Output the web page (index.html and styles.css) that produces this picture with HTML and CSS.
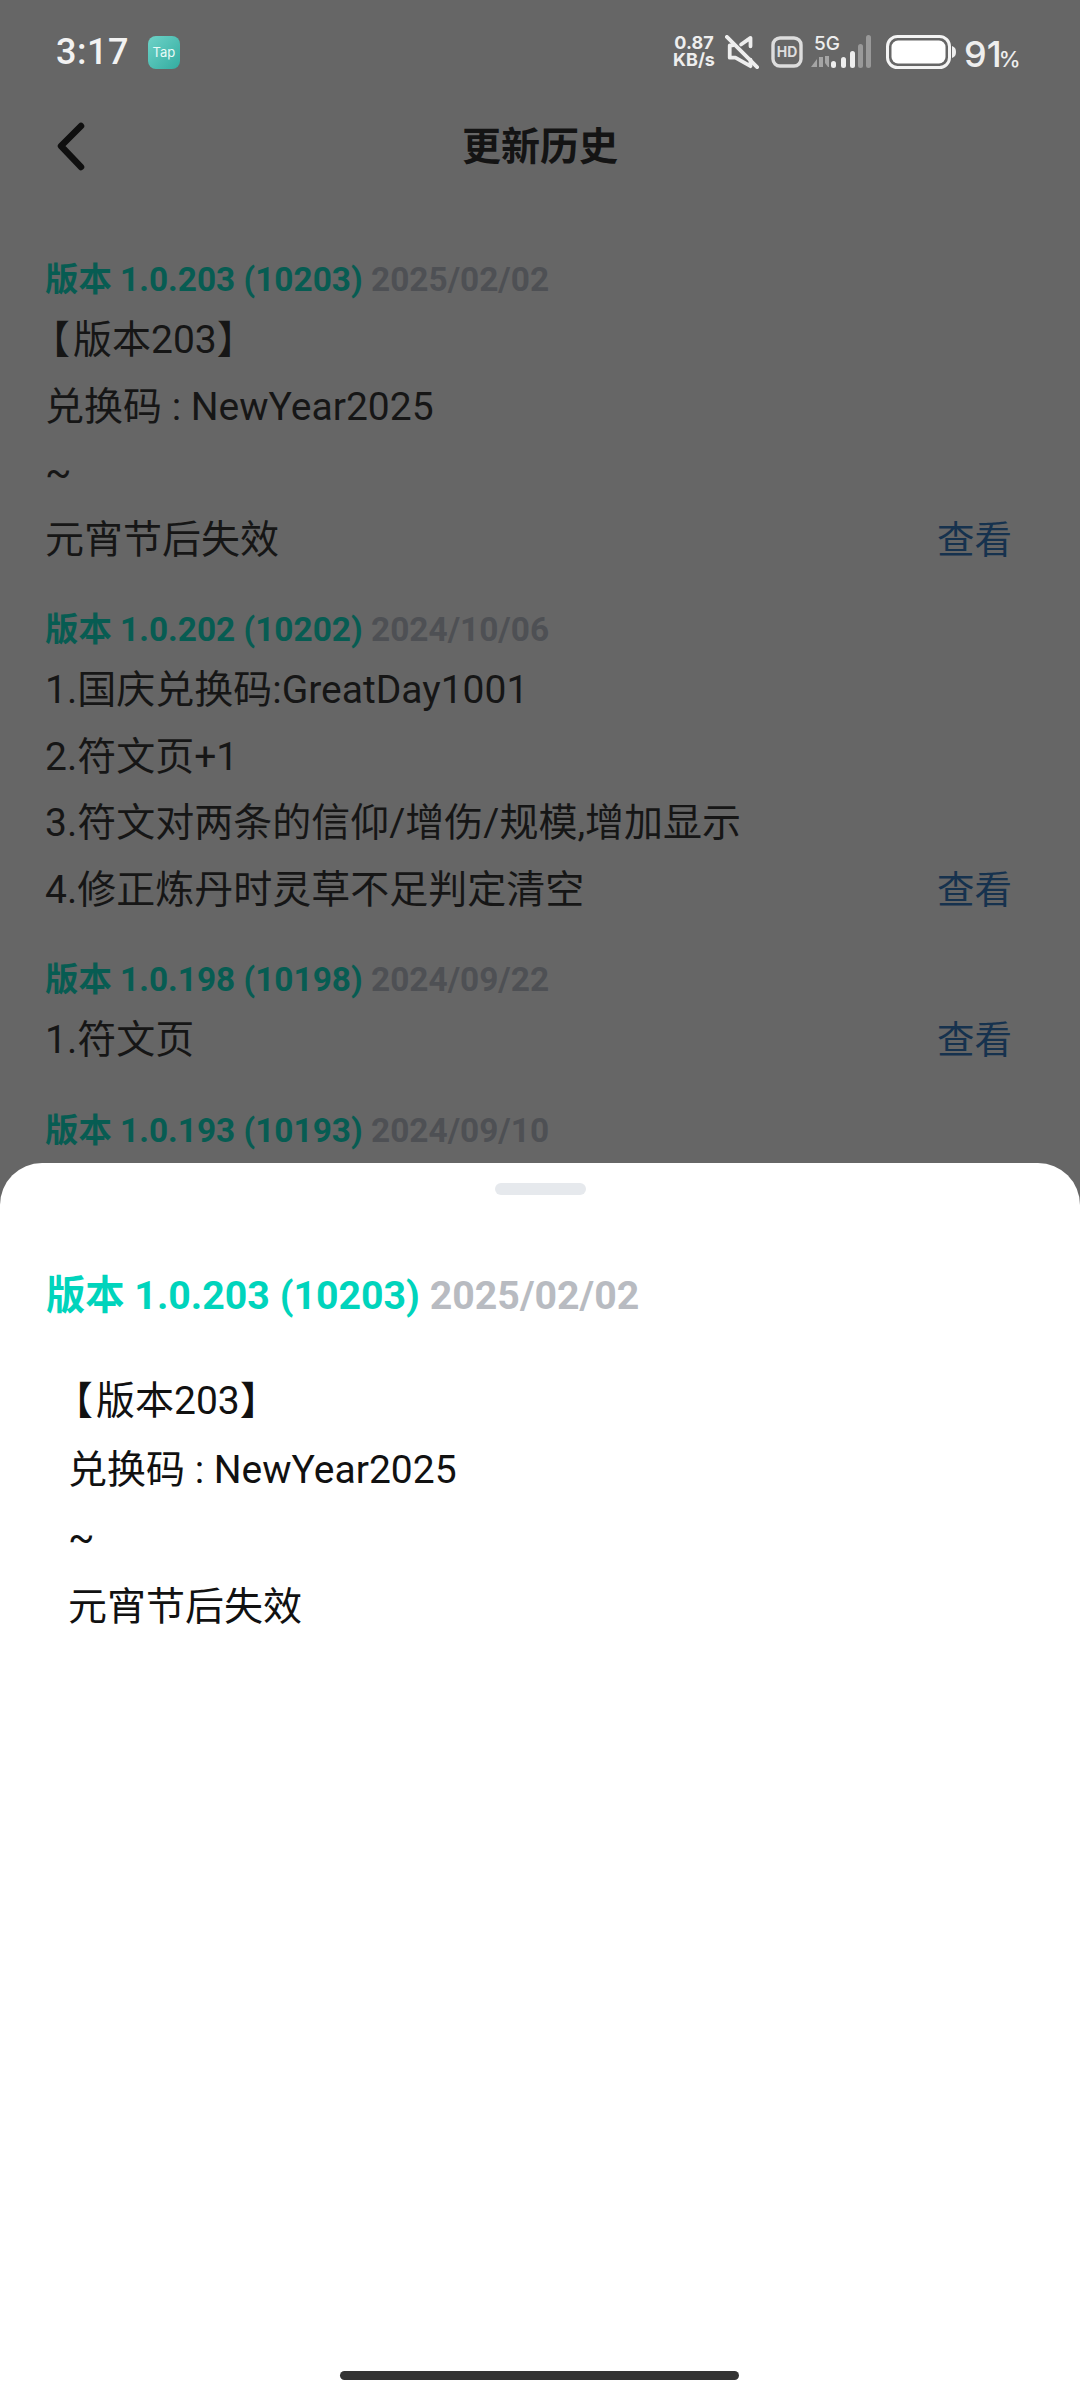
FILE: index.html
```html
<!DOCTYPE html>
<html lang="zh-CN">
<head>
<meta charset="utf-8">
<title>更新历史</title>
<link rel="stylesheet" href="styles.css">
</head>
<body>
<div class="page">
  <div class="status">
    <div class="status-left">
      <span class="time">3:17</span>
      <span class="tap">Tap</span>
    </div>
    <div class="status-right">
      <span class="speed">0.87<br>KB/s</span>
      <svg class="ic-mute" width="34" height="34" viewBox="0 0 36 36" fill="none" stroke="#eee" stroke-width="4" stroke-linecap="round" stroke-linejoin="round">
        <path d="M27 12V3L17 10M8 11H5v13h6l16 9V26"/>
        <path d="M2 2l32 32"/>
      </svg>
      <svg class="ic-hd" width="32" height="32" viewBox="0 0 32 32">
        <rect x="2" y="2" width="28" height="28" rx="7" fill="none" stroke="#ddd" stroke-width="3.4"/>
        <text x="16" y="21" text-anchor="middle" class="hd-text">HD</text>
      </svg>
      <div class="net">
        <span class="fiveg">5G</span>
        <svg width="60" height="33" viewBox="0 0 60 33">
          <path d="M0 32l6-8v8zM8 32V22h4v10zM14 21h4v11h-1l-3-4z" fill="#a5a5a5"/>
          <rect x="20" y="26" width="5" height="7" rx="2.5" fill="#eee"/>
          <rect x="30" y="22" width="5" height="11" rx="2.5" fill="#eee"/>
          <rect x="39" y="16" width="5" height="17" rx="2.5" fill="#eee"/>
          <rect x="47" y="9" width="5" height="24" rx="2.5" fill="#999"/>
          <rect x="55" y="0" width="5" height="33" rx="2.5" fill="#999"/>
        </svg>
      </div>
      <svg class="ic-batt" width="70" height="34" viewBox="0 0 70 34">
        <rect x="1.5" y="1.5" width="62" height="31" rx="10" fill="none" stroke="#f4f4f4" stroke-width="3"/>
        <rect x="5.5" y="5.5" width="54" height="23" rx="6.5" fill="#fff"/>
        <path d="M66 11c3 1 4 3 4 6s-1 5-4 6z" fill="#eee"/>
      </svg>
      <span class="pct">91<small>%</small></span>
    </div>
  </div>

  <header class="nav">
    <svg class="back" width="28" height="50" viewBox="0 0 28 50" fill="none" stroke="#0f0f0f" stroke-width="6.5" stroke-linecap="round" stroke-linejoin="round">
      <path d="M24 4L4 24l20 21"/>
    </svg>
    <h1 class="title">更新历史</h1>
  </header>

  <main class="list">
    <section class="entry">
      <div class="head"><span class="ver">版本 1.0.203 (10203)</span> <span class="date">2025/02/02</span></div>
      <div class="body">
        <div class="lines">
          <p><span class="lb">【</span>版本203】</p>
          <p>兑换码 : NewYear2025</p>
          <p>~</p>
          <p>元宵节后失效</p>
        </div>
        <a class="view">查看</a>
      </div>
    </section>
    <section class="entry">
      <div class="head"><span class="ver">版本 1.0.202 (10202)</span> <span class="date">2024/10/06</span></div>
      <div class="body">
        <div class="lines">
          <p>1.国庆兑换码:GreatDay1001</p>
          <p>2.符文页+1</p>
          <p>3.符文对两条的信仰/增伤/规模,增加显示</p>
          <p>4.修正炼丹时灵草不足判定清空</p>
        </div>
        <a class="view">查看</a>
      </div>
    </section>
    <section class="entry">
      <div class="head"><span class="ver">版本 1.0.198 (10198)</span> <span class="date">2024/09/22</span></div>
      <div class="body">
        <div class="lines">
          <p>1.符文页</p>
        </div>
        <a class="view">查看</a>
      </div>
    </section>
    <section class="entry">
      <div class="head"><span class="ver">版本 1.0.193 (10193)</span> <span class="date">2024/09/10</span></div>
    </section>
  </main>

  <aside class="sheet">
    <div class="handle"></div>
    <div class="sheet-head"><span class="sheet-ver">版本 1.0.203 (10203)</span> <span class="sheet-date">2025/02/02</span></div>
    <div class="sheet-lines">
      <p><span class="lb">【</span>版本203】</p>
      <p>兑换码 : NewYear2025</p>
      <p>~</p>
      <p>元宵节后失效</p>
    </div>
    <div class="home-bar"></div>
  </aside>
</div>
</body>
</html>
```

FILE: styles.css
```css
* { box-sizing: border-box; }
html, body { margin: 0; padding: 0; }
body {
  width: 1080px;
  height: 2400px;
  overflow: hidden;
  font-family: "Roboto", "Noto Sans CJK SC", sans-serif;
}
p { margin: 0; }

.page {
  position: relative;
  width: 1080px;
  height: 2400px;
  overflow: hidden;
  background: #666666;
  color: #161616;
}

/* status bar */
.status {
  height: 100px;
  padding: 34px 61px 0 56px;
  display: flex;
  justify-content: space-between;
  align-items: flex-start;
  color: #f2f2f2;
}
.status-left { display: flex; align-items: center; gap: 19px; height: 36px; }
.time { font-size: 36px; font-weight: 500; letter-spacing: 0.5px; line-height: 36px; }
.tap {
  width: 32px;
  height: 33px;
  border-radius: 8px;
  background: linear-gradient(135deg, #6ed3c8, #33aca0);
  color: #e8fbf8;
  font-family: "Inter", sans-serif;
  font-size: 13px;
  line-height: 33px;
  text-align: center;
}
.status-right { display: flex; align-items: flex-start; height: 36px; }
.speed {
  width: 44px;
  margin-right: 9px;
  font-family: "Inter", sans-serif;
  font-size: 18px;
  line-height: 17px;
  font-weight: 700;
  text-align: center;
  color: #eee;
}
.ic-mute { margin-right: 12px; margin-top: 1px; }
.ic-hd { margin-right: 8px; margin-top: 2px; }
.hd-text { font: 700 14px "Inter", sans-serif; fill: #ddd; }
.net { position: relative; width: 60px; height: 33px; margin-top: 1px; margin-right: 15px; }
.fiveg {
  position: absolute;
  left: 3px;
  top: -1px;
  font-family: "Inter", sans-serif;
  font-size: 19px;
  line-height: 19px;
  font-weight: 500;
  color: #eee;
}
.ic-batt { margin-top: 1px; margin-right: 8px; }
.pct { width: 55px; font-family: "Inter", sans-serif; font-size: 36px; font-weight: 500; line-height: 36px; margin-top: 2px; color: #eee; white-space: nowrap; }
.pct small { font-size: 22px; margin-left: -3px; }

/* nav */
.nav {
  position: relative;
  height: 94px;
  display: flex;
  justify-content: center;
  align-items: center;
}
.back { position: absolute; left: 57px; top: 22px; }
.title { margin: 0; font-size: 39px; line-height: 94px; font-weight: 700; color: #141414; }

/* list */
.list { padding: 61px 45px 0; display: flex; flex-direction: column; gap: 32px; }
.entry { display: flex; flex-direction: column; gap: 2px; }
.head { font-size: 33.4px; line-height: 50px; font-weight: 700; white-space: nowrap; }
.ver { color: #075c52; }
.date { color: #4e5054; }
.body { display: flex; justify-content: space-between; align-items: flex-end; padding-right: 23px; }
.lines p { font-size: 39px; line-height: 66.5px; white-space: nowrap; }
.lb { margin-left: -14px; margin-right: 3px; }
.view { font-size: 37.5px; line-height: 66.5px; color: #16324e; }

/* bottom sheet */
.sheet {
  position: absolute;
  left: 0;
  right: 0;
  bottom: 0;
  height: 1237px;
  padding: 20px 46px 0;
  background: #ffffff;
  border-radius: 42px 42px 0 0;
  color: #111;
}
.handle { width: 91px; height: 12px; margin: 0 auto; border-radius: 6px; background: #e6e9ed; }
.sheet-head { margin-top: 73px; font-size: 39.3px; line-height: 56px; font-weight: 700; white-space: nowrap; }
.sheet-ver { color: #00d4bc; }
.sheet-date { color: #b8bbc1; }
.sheet-lines { margin-top: 43px; padding-left: 22px; }
.sheet-lines p { font-size: 39px; line-height: 68.7px; white-space: nowrap; }
.home-bar {
  position: absolute;
  left: 340px;
  bottom: 20px;
  width: 399px;
  height: 9px;
  border-radius: 5px;
  background: #333333;
}
```
